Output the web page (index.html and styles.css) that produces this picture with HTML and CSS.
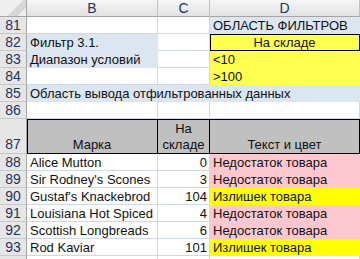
FILE: index.html
```html
<!DOCTYPE html>
<html lang="ru">
<head>
    <meta charset="UTF-8">
    <title>Расширенный фильтр</title>
    <link rel="stylesheet" href="styles.css">
</head>
<body>
<div class="sheet">
    <!-- column headers -->
    <div class="corner"></div>
    <div class="colhead">B</div>
    <div class="colhead">C</div>
    <div class="colhead">D</div>

    <!-- filter area -->
    <div class="rowhead">81</div>
    <div class="cell"></div>
    <div class="cell"></div>
    <div class="cell blue">ОБЛАСТЬ ФИЛЬТРОВ</div>

    <div class="rowhead">82</div>
    <div class="cell blue">Фильтр 3.1.</div>
    <div class="cell"></div>
    <div class="cell crit boxed center">На складе</div>

    <div class="rowhead">83</div>
    <div class="cell blue">Диапазон условий</div>
    <div class="cell"></div>
    <div class="cell crit">&lt;10</div>

    <div class="rowhead">84</div>
    <div class="cell"></div>
    <div class="cell"></div>
    <div class="cell crit">&gt;100</div>

    <div class="rowhead">85</div>
    <div class="cell blue span3">Область вывода отфильтрованных данных</div>

    <div class="rowhead">86</div>
    <div class="cell"></div>
    <div class="cell"></div>
    <div class="cell"></div>

    <!-- output table -->
    <div class="rowhead tall">87</div>
    <div class="cell th first">Марка</div>
    <div class="cell th">На<br>складе</div>
    <div class="cell th">Текст и цвет</div>

    <div class="rowhead">88</div>
    <div class="cell">Alice Mutton</div>
    <div class="cell num">0</div>
    <div class="cell pink">Недостаток товара</div>

    <div class="rowhead">89</div>
    <div class="cell">Sir Rodney's Scones</div>
    <div class="cell num">3</div>
    <div class="cell pink">Недостаток товара</div>

    <div class="rowhead">90</div>
    <div class="cell">Gustaf's Knackebrod</div>
    <div class="cell num">104</div>
    <div class="cell yellow">Излишек товара</div>

    <div class="rowhead">91</div>
    <div class="cell">Louisiana Hot Spiced</div>
    <div class="cell num">4</div>
    <div class="cell pink">Недостаток товара</div>

    <div class="rowhead">92</div>
    <div class="cell">Scottish Longbreads</div>
    <div class="cell num">6</div>
    <div class="cell pink">Недостаток товара</div>

    <div class="rowhead">93</div>
    <div class="cell">Rod Kaviar</div>
    <div class="cell num">101</div>
    <div class="cell yellow">Излишек товара</div>

    <!-- next row, only its top edge is in view -->
    <div class="rowhead"></div>
    <div class="cell"></div>
    <div class="cell"></div>
    <div class="cell"></div>
</div>
</body>
</html>
```

FILE: styles.css
```css
* {
    margin: 0;
    padding: 0;
    box-sizing: border-box;
}
html, body {
    height: 100%;
}
body {
    background: #fff;
    font-family: "Liberation Sans", Arial, sans-serif;
    font-size: 13px;
    color: #111;
    overflow: hidden;
}
.sheet {
    display: grid;
    grid-template-columns: 27px 131px 52px 150px;
    /* header + rows 81..86, then the two-line row 87 */
    grid-template-rows: repeat(7, 17px) 35px;
    grid-auto-rows: 17px;
    height: 100%;
    overflow: hidden;
}
.corner, .colhead, .rowhead, .cell {
    border-right: 1px solid #d0d7e5;
    border-bottom: 1px solid #d0d7e5;
    white-space: nowrap;
    line-height: 15px;
}
.corner {
    background: linear-gradient(135deg, #efefef 55%, #d7d7d7 55%, #d7d7d7 80%, #efefef 80%);
    border-right-color: #a5a5a5;
    border-bottom-color: #a5a5a5;
}
.colhead {
    background: linear-gradient(#f6f6f6, #e2e2e2);
    border-right-color: #c3c3c3;
    border-bottom-color: #a5a5a5;
    color: #1e355e;
    text-align: center;
    font-size: 14px;
    line-height: 16px;
}
.rowhead {
    background: #e6e6e6;
    border-right-color: #a5a5a5;
    border-bottom-color: #c8c8c8;
    color: #1e355e;
    text-align: center;
    font-size: 14px;
    line-height: 17px;
}
.rowhead.tall {
    display: flex;
    align-items: flex-end;
    justify-content: center;
}
.cell {
    padding: 1px 3px 0;
}
.num {
    text-align: right;
    padding-right: 2px;
}
.center {
    text-align: center;
}
.span3 {
    grid-column: span 3;
}
.blue, .yellow, .pink, .crit {
    border-color: transparent;
}
.blue {
    background: #dce6f1;
}
.yellow {
    background: #ffff00;
}
.crit {
    background: #ffff50;
}
.pink {
    background: #ffc7ce;
}
.boxed {
    border-right: 1px solid #000;
    border-bottom: 1px solid #000;
    box-shadow: inset 1px 1px 0 #000;
}
.th {
    background: #c0c0c0;
    border-right: 1px solid #000;
    border-bottom: 1px solid #000;
    box-shadow: inset 0 1px 0 #000;
    display: flex;
    flex-direction: column;
    justify-content: flex-end;
    align-items: center;
    text-align: center;
    white-space: normal;
    line-height: 16px;
}
.th.first {
    box-shadow: inset 1px 1px 0 #000;
}
```
